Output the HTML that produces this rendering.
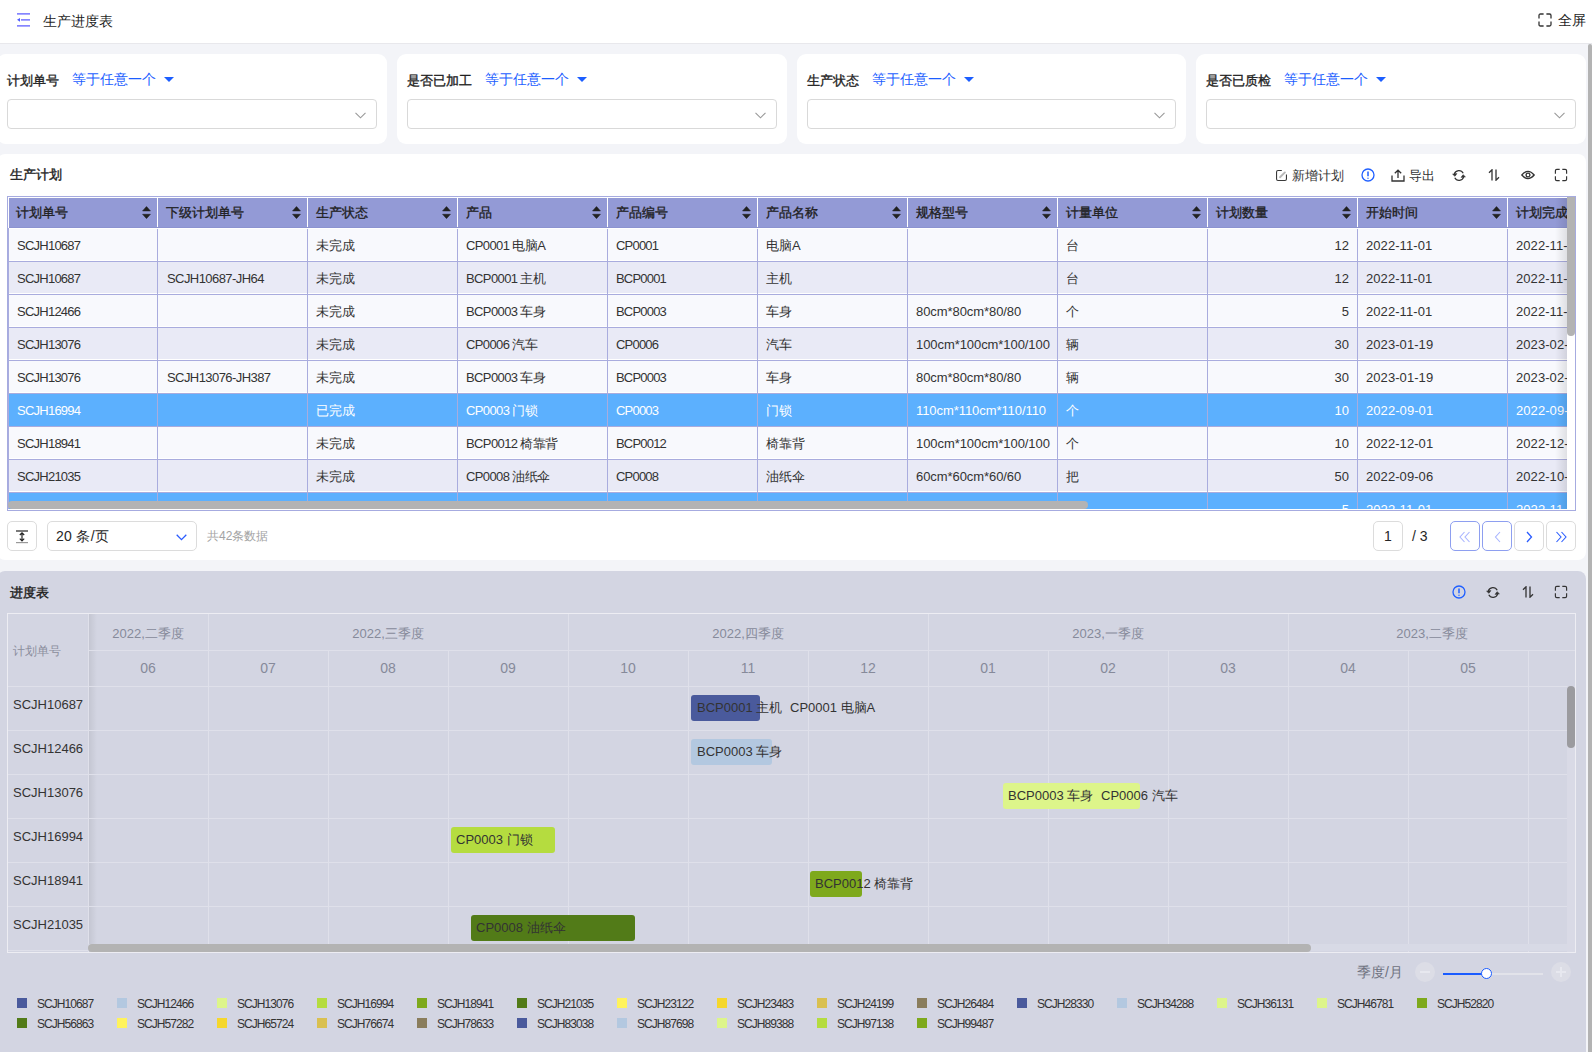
<!DOCTYPE html>
<html><head><meta charset="utf-8"><style>
*{box-sizing:border-box;margin:0;padding:0}
html,body{width:1592px;height:1052px;overflow:hidden}
body{position:relative;background:#f3f4f8;font-family:"Liberation Sans",sans-serif;color:#262626;font-size:13px}
.a{position:absolute}
svg{display:block;position:absolute}
#hdr{left:0;top:0;width:1592px;height:44px;background:#fff;border-bottom:1px solid #e8e8ec}
.card{position:absolute;background:#fff;border-radius:8px}
.flab{position:absolute;top:72px;font-size:13px;color:#1f1f1f;line-height:18px;white-space:nowrap;-webkit-text-stroke:0.35px #1f1f1f}
.fop{position:absolute;top:70px;font-size:14px;color:#1c5eff;line-height:18px;white-space:nowrap}
.ftri{position:absolute;top:77px;width:0;height:0;border-left:5px solid transparent;border-right:5px solid transparent;border-top:5px solid #1c5eff}
.fsel{position:absolute;top:99px;height:30px;border:1px solid #d9d9d9;border-radius:4px;background:#fff}
#scroll{left:1588px;top:44px;width:4px;height:1008px;background:#b3b3b3;border-radius:2px 2px 0 0}
.t{position:absolute;white-space:nowrap}
.ttl{font-size:13px;line-height:16px;color:#1f1f1f;-webkit-text-stroke:0.4px #1f1f1f}
.hc{position:absolute;top:198px;height:29px;background:#939ad6}
.ht{position:absolute;top:204px;font-size:13px;line-height:17px;color:#1f1f1f;-webkit-text-stroke:0.35px #1f1f1f;white-space:nowrap}
.row{position:absolute;left:9px;width:1558px;height:32px}
.vl{position:absolute;width:1px;background:#a9acde}
.hl{position:absolute;height:1px;background:#a9acde}
.ct{position:absolute;font-size:13px;line-height:16px;color:#333;white-space:nowrap;letter-spacing:-0.3px}
.sel .ct,.ct.w{color:#fff}
.gt{position:absolute;font-size:13px;line-height:16px;color:#333;white-space:nowrap}
.lg{position:absolute;width:10px;height:10px}
.lt{position:absolute;font-size:12px;line-height:14px;color:#333;white-space:nowrap;letter-spacing:-0.95px}
</style></head><body>
<div id="hdr" class="a">
<svg style="left:17px;top:13px" width="14" height="14" viewBox="0 0 14 14">
<rect x="0" y="0" width="13" height="1.7" fill="#8585ff"/>
<rect x="4" y="6" width="9" height="1.7" fill="#8585ff"/>
<rect x="0" y="12" width="13" height="1.7" fill="#8585ff"/>
<path d="M0 6.85 L3 5 L3 8.7 Z" fill="#4d5cff"/>
</svg>
<div class="a" style="left:43px;top:12px;font-size:14px;line-height:18px;color:#1f1f1f">生产进度表</div>
<svg style="left:1538px;top:13px" width="14" height="14" viewBox="0 0 14 14" fill="none" stroke="#333" stroke-width="1.3">
<path d="M1 5.6V2.5Q1 1 2.5 1H5.6M8.4 1h3.1Q13 1 13 2.5V5.6M13 8.4v3.1Q13 13 11.5 13H8.4M5.6 13H2.5Q1 13 1 11.5V8.4"/>
</svg>
<div class="a" style="left:1558px;top:11px;font-size:14px;line-height:18px;color:#1f1f1f">全屏</div>
</div>
<div class="card" style="left:-3px;top:54px;width:390px;height:90px;border-radius:9px"></div>
<div class="card" style="left:397px;top:54px;width:390px;height:90px;border-radius:9px"></div>
<div class="card" style="left:797px;top:54px;width:389px;height:90px;border-radius:9px"></div>
<div class="card" style="left:1196px;top:54px;width:390px;height:90px;border-radius:9px"></div>
<div class="flab" style="left:7px">计划单号</div>
<div class="fop" style="left:72px">等于任意一个</div><div class="ftri" style="left:164px"></div>
<div class="fsel" style="left:7px;width:370px"></div>
<svg style="left:355px;top:112px" width="11" height="7" viewBox="0 0 11 7" fill="none" stroke="#999" stroke-width="1.1"><path d="M0.5 0.8 L5.5 5.8 L10.5 0.8"/></svg>
<div class="flab" style="left:407px">是否已加工</div>
<div class="fop" style="left:485px">等于任意一个</div><div class="ftri" style="left:577px"></div>
<div class="fsel" style="left:407px;width:370px"></div>
<svg style="left:755px;top:112px" width="11" height="7" viewBox="0 0 11 7" fill="none" stroke="#999" stroke-width="1.1"><path d="M0.5 0.8 L5.5 5.8 L10.5 0.8"/></svg>
<div class="flab" style="left:807px">生产状态</div>
<div class="fop" style="left:872px">等于任意一个</div><div class="ftri" style="left:964px"></div>
<div class="fsel" style="left:807px;width:369px"></div>
<svg style="left:1154px;top:112px" width="11" height="7" viewBox="0 0 11 7" fill="none" stroke="#999" stroke-width="1.1"><path d="M0.5 0.8 L5.5 5.8 L10.5 0.8"/></svg>
<div class="flab" style="left:1206px">是否已质检</div>
<div class="fop" style="left:1284px">等于任意一个</div><div class="ftri" style="left:1376px"></div>
<div class="fsel" style="left:1206px;width:370px"></div>
<svg style="left:1554px;top:112px" width="11" height="7" viewBox="0 0 11 7" fill="none" stroke="#999" stroke-width="1.1"><path d="M0.5 0.8 L5.5 5.8 L10.5 0.8"/></svg>
<div class="card" style="left:-3px;top:154px;width:1589px;height:406px"></div>
<div class="t ttl" style="left:10px;top:167px">生产计划</div>
<svg style="left:1276px;top:170px" width="11" height="11" viewBox="0 0 11 11" fill="none">
<path d="M5.8 0.55H2Q0.55 0.55 0.55 2V9Q0.55 10.45 2 10.45H9Q10.45 10.45 10.45 9V4.6" stroke="#3a3a3a" stroke-width="1.1"/>
<path d="M4 7.2L8.9 2.4" stroke="#b8b8b8" stroke-width="1.9" stroke-linecap="round"/>
</svg>
<div class="t" style="left:1292px;top:168px;font-size:13px;line-height:16px;color:#333">新增计划</div>
<svg style="left:1361px;top:168px" width="14" height="14" viewBox="0 0 14 14" fill="none" stroke="#1f5fff" stroke-width="1.3">
<circle cx="7" cy="7" r="6"/><path d="M7 3.6v4.6" stroke-width="1.5"/><circle cx="7" cy="10.2" r="0.4" fill="#1f5fff" stroke-width="0.6"/>
</svg>
<svg style="left:1391px;top:169px" width="14" height="13" viewBox="0 0 14 13" fill="none" stroke="#333" stroke-width="1.3">
<path d="M1 6.5V12H13V6.5"/><path d="M7 9V1.2M3.8 4.2L7 1.2L10.2 4.2"/>
</svg>
<div class="t" style="left:1409px;top:168px;font-size:13px;line-height:16px;color:#333">导出</div>
<svg style="left:1452px;top:169px" width="14" height="13" viewBox="0 0 14 13" fill="none" stroke="#333" stroke-width="1.25">
<path d="M2.3 5.2A4.8 4.8 0 0 1 11.2 4.3"/><path d="M11.7 7.8A4.8 4.8 0 0 1 2.8 8.7"/>
<path d="M0.6 5.2L3 7.3L4.9 4.6Z" fill="#333" stroke-width="0.6"/><path d="M13.4 7.8L11 5.7L9.1 8.4Z" fill="#333" stroke-width="0.6"/>
</svg>
<svg style="left:1488px;top:169px" width="12" height="12" viewBox="0 0 12 12" fill="none" stroke="#333" stroke-width="1.3">
<path d="M4 11.5V0.8L1 3.8"/><path d="M8 0.5V11.2L11 8.2"/>
</svg>
<svg style="left:1521px;top:170px" width="14" height="10" viewBox="0 0 14 10" fill="none" stroke="#333" stroke-width="1.3">
<path d="M0.8 5Q7 -2.2 13.2 5Q7 12.2 0.8 5Z"/><circle cx="7" cy="5" r="1.9"/>
</svg>
<svg style="left:1554px;top:168px" width="14" height="14" viewBox="-0.5 -0.5 15 15" fill="none" stroke="#333" stroke-width="1.25">
<path d="M1 5.6V2.5Q1 1 2.5 1H5.6M8.4 1h3.1Q13 1 13 2.5V5.6M13 8.4v3.1Q13 13 11.5 13H8.4M5.6 13H2.5Q1 13 1 11.5V8.4"/>
</svg>
<div class="a" style="left:7px;top:196px;width:1569px;height:315px;border:1px solid #a6abe0;background:#fff"></div>
<div class="a" style="left:0;top:0;width:1592px;height:1052px;clip-path:inset(197px 25px 543px 8px)">
<div class="hc" style="left:9px;width:148px"></div>
<div class="hc" style="left:158px;width:149px"></div>
<div class="hc" style="left:308px;width:149px"></div>
<div class="hc" style="left:458px;width:149px"></div>
<div class="hc" style="left:608px;width:149px"></div>
<div class="hc" style="left:758px;width:149px"></div>
<div class="hc" style="left:908px;width:149px"></div>
<div class="hc" style="left:1058px;width:149px"></div>
<div class="hc" style="left:1208px;width:149px"></div>
<div class="hc" style="left:1358px;width:149px"></div>
<div class="hc" style="left:1508px;width:149px"></div>
<div class="a" style="left:9px;top:227px;width:1558px;height:1px;background:#8c93d0"></div>
<div class="ht" style="left:16px">计划单号</div>
<svg style="left:142px;top:206px" width="9" height="14" viewBox="0 0 9 14" fill="#222" stroke="#222" stroke-width="0.6" stroke-linejoin="round"><path d="M0.6 4.9L4.5 0.6L8.4 4.9Z"/><path d="M0.6 8.3L4.5 12.6L8.4 8.3Z"/></svg>
<div class="ht" style="left:166px">下级计划单号</div>
<svg style="left:292px;top:206px" width="9" height="14" viewBox="0 0 9 14" fill="#222" stroke="#222" stroke-width="0.6" stroke-linejoin="round"><path d="M0.6 4.9L4.5 0.6L8.4 4.9Z"/><path d="M0.6 8.3L4.5 12.6L8.4 8.3Z"/></svg>
<div class="ht" style="left:316px">生产状态</div>
<svg style="left:442px;top:206px" width="9" height="14" viewBox="0 0 9 14" fill="#222" stroke="#222" stroke-width="0.6" stroke-linejoin="round"><path d="M0.6 4.9L4.5 0.6L8.4 4.9Z"/><path d="M0.6 8.3L4.5 12.6L8.4 8.3Z"/></svg>
<div class="ht" style="left:466px">产品</div>
<svg style="left:592px;top:206px" width="9" height="14" viewBox="0 0 9 14" fill="#222" stroke="#222" stroke-width="0.6" stroke-linejoin="round"><path d="M0.6 4.9L4.5 0.6L8.4 4.9Z"/><path d="M0.6 8.3L4.5 12.6L8.4 8.3Z"/></svg>
<div class="ht" style="left:616px">产品编号</div>
<svg style="left:742px;top:206px" width="9" height="14" viewBox="0 0 9 14" fill="#222" stroke="#222" stroke-width="0.6" stroke-linejoin="round"><path d="M0.6 4.9L4.5 0.6L8.4 4.9Z"/><path d="M0.6 8.3L4.5 12.6L8.4 8.3Z"/></svg>
<div class="ht" style="left:766px">产品名称</div>
<svg style="left:892px;top:206px" width="9" height="14" viewBox="0 0 9 14" fill="#222" stroke="#222" stroke-width="0.6" stroke-linejoin="round"><path d="M0.6 4.9L4.5 0.6L8.4 4.9Z"/><path d="M0.6 8.3L4.5 12.6L8.4 8.3Z"/></svg>
<div class="ht" style="left:916px">规格型号</div>
<svg style="left:1042px;top:206px" width="9" height="14" viewBox="0 0 9 14" fill="#222" stroke="#222" stroke-width="0.6" stroke-linejoin="round"><path d="M0.6 4.9L4.5 0.6L8.4 4.9Z"/><path d="M0.6 8.3L4.5 12.6L8.4 8.3Z"/></svg>
<div class="ht" style="left:1066px">计量单位</div>
<svg style="left:1192px;top:206px" width="9" height="14" viewBox="0 0 9 14" fill="#222" stroke="#222" stroke-width="0.6" stroke-linejoin="round"><path d="M0.6 4.9L4.5 0.6L8.4 4.9Z"/><path d="M0.6 8.3L4.5 12.6L8.4 8.3Z"/></svg>
<div class="ht" style="left:1216px">计划数量</div>
<svg style="left:1342px;top:206px" width="9" height="14" viewBox="0 0 9 14" fill="#222" stroke="#222" stroke-width="0.6" stroke-linejoin="round"><path d="M0.6 4.9L4.5 0.6L8.4 4.9Z"/><path d="M0.6 8.3L4.5 12.6L8.4 8.3Z"/></svg>
<div class="ht" style="left:1366px">开始时间</div>
<svg style="left:1492px;top:206px" width="9" height="14" viewBox="0 0 9 14" fill="#222" stroke="#222" stroke-width="0.6" stroke-linejoin="round"><path d="M0.6 4.9L4.5 0.6L8.4 4.9Z"/><path d="M0.6 8.3L4.5 12.6L8.4 8.3Z"/></svg>
<div class="ht" style="left:1516px">计划完成时间</div>
<svg style="left:1642px;top:206px" width="9" height="14" viewBox="0 0 9 14" fill="#222" stroke="#222" stroke-width="0.6" stroke-linejoin="round"><path d="M0.6 4.9L4.5 0.6L8.4 4.9Z"/><path d="M0.6 8.3L4.5 12.6L8.4 8.3Z"/></svg>
<div class="row" style="top:229px;background:#f8f9fd"></div>
<div class="a" style="left:9px;top:260px;width:1558px;height:1px;background:#fff"></div>
<div class="hl" style="left:8px;top:261px;width:1559px"></div>
<div class="ct" style="left:17px;top:238px;color:#333;letter-spacing:-0.76px">SCJH10687</div>
<div class="ct" style="left:316px;top:238px;color:#333;letter-spacing:0px">未完成</div>
<div class="ct" style="left:466px;top:238px;color:#333;letter-spacing:-0.6px">CP0001 电脑A</div>
<div class="ct" style="left:616px;top:238px;color:#333;letter-spacing:-0.8px">CP0001</div>
<div class="ct" style="left:766px;top:238px;color:#333;letter-spacing:0px">电脑A</div>
<div class="ct" style="left:1066px;top:238px;color:#333;letter-spacing:0px">台</div>
<div class="ct" style="right:243px;top:238px;color:#333;letter-spacing:0.07px">12</div>
<div class="ct" style="left:1366px;top:238px;color:#333;letter-spacing:0.07px">2022-11-01</div>
<div class="ct" style="left:1516px;top:238px;color:#333;letter-spacing:0.07px">2022-11-30</div>
<div class="row" style="top:262px;background:#e9eaf6"></div>
<div class="a" style="left:9px;top:293px;width:1558px;height:1px;background:#fff"></div>
<div class="hl" style="left:8px;top:294px;width:1559px"></div>
<div class="ct" style="left:17px;top:271px;color:#333;letter-spacing:-0.76px">SCJH10687</div>
<div class="ct" style="left:167px;top:271px;color:#333;letter-spacing:-0.57px">SCJH10687-JH64</div>
<div class="ct" style="left:316px;top:271px;color:#333;letter-spacing:0px">未完成</div>
<div class="ct" style="left:466px;top:271px;color:#333;letter-spacing:-0.6px">BCP0001 主机</div>
<div class="ct" style="left:616px;top:271px;color:#333;letter-spacing:-0.8px">BCP0001</div>
<div class="ct" style="left:766px;top:271px;color:#333;letter-spacing:0px">主机</div>
<div class="ct" style="left:1066px;top:271px;color:#333;letter-spacing:0px">台</div>
<div class="ct" style="right:243px;top:271px;color:#333;letter-spacing:0.07px">12</div>
<div class="ct" style="left:1366px;top:271px;color:#333;letter-spacing:0.07px">2022-11-01</div>
<div class="ct" style="left:1516px;top:271px;color:#333;letter-spacing:0.07px">2022-11-30</div>
<div class="row" style="top:295px;background:#f8f9fd"></div>
<div class="a" style="left:9px;top:326px;width:1558px;height:1px;background:#fff"></div>
<div class="hl" style="left:8px;top:327px;width:1559px"></div>
<div class="ct" style="left:17px;top:304px;color:#333;letter-spacing:-0.76px">SCJH12466</div>
<div class="ct" style="left:316px;top:304px;color:#333;letter-spacing:0px">未完成</div>
<div class="ct" style="left:466px;top:304px;color:#333;letter-spacing:-0.6px">BCP0003 车身</div>
<div class="ct" style="left:616px;top:304px;color:#333;letter-spacing:-0.8px">BCP0003</div>
<div class="ct" style="left:766px;top:304px;color:#333;letter-spacing:0px">车身</div>
<div class="ct" style="left:916px;top:304px;color:#333;letter-spacing:-0.07px">80cm*80cm*80/80</div>
<div class="ct" style="left:1066px;top:304px;color:#333;letter-spacing:0px">个</div>
<div class="ct" style="right:243px;top:304px;color:#333;letter-spacing:0.07px">5</div>
<div class="ct" style="left:1366px;top:304px;color:#333;letter-spacing:0.07px">2022-11-01</div>
<div class="ct" style="left:1516px;top:304px;color:#333;letter-spacing:0.07px">2022-11-30</div>
<div class="row" style="top:328px;background:#e9eaf6"></div>
<div class="a" style="left:9px;top:359px;width:1558px;height:1px;background:#fff"></div>
<div class="hl" style="left:8px;top:360px;width:1559px"></div>
<div class="ct" style="left:17px;top:337px;color:#333;letter-spacing:-0.76px">SCJH13076</div>
<div class="ct" style="left:316px;top:337px;color:#333;letter-spacing:0px">未完成</div>
<div class="ct" style="left:466px;top:337px;color:#333;letter-spacing:-0.6px">CP0006 汽车</div>
<div class="ct" style="left:616px;top:337px;color:#333;letter-spacing:-0.8px">CP0006</div>
<div class="ct" style="left:766px;top:337px;color:#333;letter-spacing:0px">汽车</div>
<div class="ct" style="left:916px;top:337px;color:#333;letter-spacing:-0.07px">100cm*100cm*100/100</div>
<div class="ct" style="left:1066px;top:337px;color:#333;letter-spacing:0px">辆</div>
<div class="ct" style="right:243px;top:337px;color:#333;letter-spacing:0.07px">30</div>
<div class="ct" style="left:1366px;top:337px;color:#333;letter-spacing:0.07px">2023-01-19</div>
<div class="ct" style="left:1516px;top:337px;color:#333;letter-spacing:0.07px">2023-02-28</div>
<div class="row" style="top:361px;background:#f8f9fd"></div>
<div class="a" style="left:9px;top:392px;width:1558px;height:1px;background:#fff"></div>
<div class="hl" style="left:8px;top:393px;width:1559px"></div>
<div class="ct" style="left:17px;top:370px;color:#333;letter-spacing:-0.76px">SCJH13076</div>
<div class="ct" style="left:167px;top:370px;color:#333;letter-spacing:-0.57px">SCJH13076-JH387</div>
<div class="ct" style="left:316px;top:370px;color:#333;letter-spacing:0px">未完成</div>
<div class="ct" style="left:466px;top:370px;color:#333;letter-spacing:-0.6px">BCP0003 车身</div>
<div class="ct" style="left:616px;top:370px;color:#333;letter-spacing:-0.8px">BCP0003</div>
<div class="ct" style="left:766px;top:370px;color:#333;letter-spacing:0px">车身</div>
<div class="ct" style="left:916px;top:370px;color:#333;letter-spacing:-0.07px">80cm*80cm*80/80</div>
<div class="ct" style="left:1066px;top:370px;color:#333;letter-spacing:0px">辆</div>
<div class="ct" style="right:243px;top:370px;color:#333;letter-spacing:0.07px">30</div>
<div class="ct" style="left:1366px;top:370px;color:#333;letter-spacing:0.07px">2023-01-19</div>
<div class="ct" style="left:1516px;top:370px;color:#333;letter-spacing:0.07px">2023-02-28</div>
<div class="row" style="top:394px;background:#5cb0fe"></div>
<div class="hl" style="left:8px;top:426px;width:1559px"></div>
<div class="ct" style="left:17px;top:403px;color:#fff;letter-spacing:-0.76px">SCJH16994</div>
<div class="ct" style="left:316px;top:403px;color:#fff;letter-spacing:0px">已完成</div>
<div class="ct" style="left:466px;top:403px;color:#fff;letter-spacing:-0.6px">CP0003 门锁</div>
<div class="ct" style="left:616px;top:403px;color:#fff;letter-spacing:-0.8px">CP0003</div>
<div class="ct" style="left:766px;top:403px;color:#fff;letter-spacing:0px">门锁</div>
<div class="ct" style="left:916px;top:403px;color:#fff;letter-spacing:-0.07px">110cm*110cm*110/110</div>
<div class="ct" style="left:1066px;top:403px;color:#fff;letter-spacing:0px">个</div>
<div class="ct" style="right:243px;top:403px;color:#fff;letter-spacing:0.07px">10</div>
<div class="ct" style="left:1366px;top:403px;color:#fff;letter-spacing:0.07px">2022-09-01</div>
<div class="ct" style="left:1516px;top:403px;color:#fff;letter-spacing:0.07px">2022-09-30</div>
<div class="row" style="top:427px;background:#f8f9fd"></div>
<div class="a" style="left:9px;top:458px;width:1558px;height:1px;background:#fff"></div>
<div class="hl" style="left:8px;top:459px;width:1559px"></div>
<div class="ct" style="left:17px;top:436px;color:#333;letter-spacing:-0.76px">SCJH18941</div>
<div class="ct" style="left:316px;top:436px;color:#333;letter-spacing:0px">未完成</div>
<div class="ct" style="left:466px;top:436px;color:#333;letter-spacing:-0.6px">BCP0012 椅靠背</div>
<div class="ct" style="left:616px;top:436px;color:#333;letter-spacing:-0.8px">BCP0012</div>
<div class="ct" style="left:766px;top:436px;color:#333;letter-spacing:0px">椅靠背</div>
<div class="ct" style="left:916px;top:436px;color:#333;letter-spacing:-0.07px">100cm*100cm*100/100</div>
<div class="ct" style="left:1066px;top:436px;color:#333;letter-spacing:0px">个</div>
<div class="ct" style="right:243px;top:436px;color:#333;letter-spacing:0.07px">10</div>
<div class="ct" style="left:1366px;top:436px;color:#333;letter-spacing:0.07px">2022-12-01</div>
<div class="ct" style="left:1516px;top:436px;color:#333;letter-spacing:0.07px">2022-12-31</div>
<div class="row" style="top:460px;background:#e9eaf6"></div>
<div class="a" style="left:9px;top:491px;width:1558px;height:1px;background:#fff"></div>
<div class="hl" style="left:8px;top:492px;width:1559px"></div>
<div class="ct" style="left:17px;top:469px;color:#333;letter-spacing:-0.76px">SCJH21035</div>
<div class="ct" style="left:316px;top:469px;color:#333;letter-spacing:0px">未完成</div>
<div class="ct" style="left:466px;top:469px;color:#333;letter-spacing:-0.6px">CP0008 油纸伞</div>
<div class="ct" style="left:616px;top:469px;color:#333;letter-spacing:-0.8px">CP0008</div>
<div class="ct" style="left:766px;top:469px;color:#333;letter-spacing:0px">油纸伞</div>
<div class="ct" style="left:916px;top:469px;color:#333;letter-spacing:-0.07px">60cm*60cm*60/60</div>
<div class="ct" style="left:1066px;top:469px;color:#333;letter-spacing:0px">把</div>
<div class="ct" style="right:243px;top:469px;color:#333;letter-spacing:0.07px">50</div>
<div class="ct" style="left:1366px;top:469px;color:#333;letter-spacing:0.07px">2022-09-06</div>
<div class="ct" style="left:1516px;top:469px;color:#333;letter-spacing:0.07px">2022-10-06</div>
<div class="row" style="top:493px;background:#5cb0fe"></div>
<div class="hl" style="left:8px;top:525px;width:1559px"></div>
<div class="ct" style="left:17px;top:502px;color:#fff;letter-spacing:-0.76px">SCJH23122</div>
<div class="ct" style="left:316px;top:502px;color:#fff;letter-spacing:0px">未完成</div>
<div class="ct" style="left:466px;top:502px;color:#fff;letter-spacing:-0.6px">BCP0003 车身</div>
<div class="ct" style="left:616px;top:502px;color:#fff;letter-spacing:-0.8px">BCP0003</div>
<div class="ct" style="left:766px;top:502px;color:#fff;letter-spacing:0px">车身</div>
<div class="ct" style="left:916px;top:502px;color:#fff;letter-spacing:-0.07px">80cm*80cm*80/80</div>
<div class="ct" style="left:1066px;top:502px;color:#fff;letter-spacing:0px">个</div>
<div class="ct" style="right:243px;top:502px;color:#fff;letter-spacing:0.07px">5</div>
<div class="ct" style="left:1366px;top:502px;color:#fff;letter-spacing:0.07px">2022-11-01</div>
<div class="ct" style="left:1516px;top:502px;color:#fff;letter-spacing:0.07px">2022-11-30</div>
<div class="vl" style="left:8px;top:228px;height:282px"></div>
<div class="vl" style="left:157px;top:228px;height:282px"></div>
<div class="a" style="left:157px;top:198px;width:1px;height:29px;background:#fff"></div>
<div class="vl" style="left:307px;top:228px;height:282px"></div>
<div class="a" style="left:307px;top:198px;width:1px;height:29px;background:#fff"></div>
<div class="vl" style="left:457px;top:228px;height:282px"></div>
<div class="a" style="left:457px;top:198px;width:1px;height:29px;background:#fff"></div>
<div class="vl" style="left:607px;top:228px;height:282px"></div>
<div class="a" style="left:607px;top:198px;width:1px;height:29px;background:#fff"></div>
<div class="vl" style="left:757px;top:228px;height:282px"></div>
<div class="a" style="left:757px;top:198px;width:1px;height:29px;background:#fff"></div>
<div class="vl" style="left:907px;top:228px;height:282px"></div>
<div class="a" style="left:907px;top:198px;width:1px;height:29px;background:#fff"></div>
<div class="vl" style="left:1057px;top:228px;height:282px"></div>
<div class="a" style="left:1057px;top:198px;width:1px;height:29px;background:#fff"></div>
<div class="vl" style="left:1207px;top:228px;height:282px"></div>
<div class="a" style="left:1207px;top:198px;width:1px;height:29px;background:#fff"></div>
<div class="vl" style="left:1357px;top:228px;height:282px"></div>
<div class="a" style="left:1357px;top:198px;width:1px;height:29px;background:#fff"></div>
<div class="vl" style="left:1507px;top:228px;height:282px"></div>
<div class="a" style="left:1507px;top:198px;width:1px;height:29px;background:#fff"></div>
<div class="a" style="left:9px;top:228px;width:1558px;height:1px;background:#fff"></div>
</div>
<div class="a" style="left:1555px;top:198px;width:12px;height:311px;background:linear-gradient(to right,rgba(0,0,0,0),rgba(0,0,0,0.10))"></div>
<div class="a" style="left:1567px;top:197px;width:8px;height:313px;background:#fff"></div>
<div class="a" style="left:1567px;top:197px;width:8px;height:139px;background:#b3b3b3;border-radius:0 0 4px 4px"></div>
<div class="a" style="left:8px;top:501px;width:1080px;height:8px;background:#b3b3b3;border-radius:4px"></div>
<div class="a" style="left:7px;top:521px;width:30px;height:30px;border:1px solid #dcdcdc;border-radius:5px;background:#fff"></div>
<svg style="left:15px;top:530px" width="14" height="14" viewBox="0 0 14 14" fill="none" stroke="#222" stroke-width="1.2">
<path d="M1 1H13"/><path d="M1 12.6H13" stroke="#999"/><path d="M7 3V10.6M4.8 5L7 2.8L9.2 5M4.8 8.6L7 10.8L9.2 8.6"/>
</svg>
<div class="a" style="left:47px;top:521px;width:150px;height:30px;border:1px solid #dcdcdc;border-radius:5px;background:#fff"></div>
<div class="t" style="left:56px;top:527px;font-size:14px;line-height:18px;color:#262626;letter-spacing:0.3px">20 条/页</div>
<svg style="left:176px;top:534px" width="11" height="7" viewBox="0 0 11 7" fill="none" stroke="#2a5cff" stroke-width="1.3"><path d="M0.7 0.8L5.5 5.6L10.3 0.8"/></svg>
<div class="t" style="left:207px;top:528px;font-size:12px;line-height:16px;color:#a3a3a3">共42条数据</div>
<div class="a" style="left:1373px;top:521px;width:30px;height:30px;border:1px solid #dcdcdc;border-radius:5px;background:#fff"></div>
<div class="t" style="left:1384px;top:528px;font-size:14px;line-height:16px;color:#262626">1</div>
<div class="t" style="left:1412px;top:528px;font-size:14px;line-height:16px;color:#262626">/ 3</div>
<div class="a" style="left:1450px;top:521px;width:30px;height:30px;border:1px solid #8e9ff0;border-radius:5px;background:#fff"></div>
<div class="a" style="left:1482px;top:521px;width:30px;height:30px;border:1px solid #8e9ff0;border-radius:5px;background:#fff"></div>
<div class="a" style="left:1514px;top:521px;width:30px;height:30px;border:1px solid #dcdcdc;border-radius:5px;background:#fff"></div>
<div class="a" style="left:1546px;top:521px;width:30px;height:30px;border:1px solid #dcdcdc;border-radius:5px;background:#fff"></div>
<svg style="left:1459px;top:531px" width="12" height="12" viewBox="0 0 12 12" fill="none" stroke="#a8b4ff" stroke-width="1.1"><path d="M5.5 1L1 6L5.5 11M10.5 1L6 6L10.5 11"/></svg>
<svg style="left:1494px;top:531px" width="8" height="12" viewBox="0 0 8 12" fill="none" stroke="#a8b4ff" stroke-width="1.1"><path d="M6 1L1.5 6L6 11"/></svg>
<svg style="left:1525px;top:531px" width="8" height="12" viewBox="0 0 8 12" fill="none" stroke="#2a5cff" stroke-width="1.3"><path d="M2 1L6.5 6L2 11"/></svg>
<svg style="left:1555px;top:531px" width="12" height="12" viewBox="0 0 12 12" fill="none" stroke="#2a5cff" stroke-width="1.1"><path d="M1.5 1L6 6L1.5 11M6.5 1L11 6L6.5 11"/></svg>
<div class="card" style="left:-3px;top:571px;width:1589px;height:500px;background:#d3d5e2"></div>
<div class="t ttl" style="left:10px;top:585px">进度表</div>
<svg style="left:1452px;top:585px" width="14" height="14" viewBox="0 0 14 14" fill="none" stroke="#1f5fff" stroke-width="1.3">
<circle cx="7" cy="7" r="6"/><path d="M7 3.6v4.6" stroke-width="1.5"/><circle cx="7" cy="10.2" r="0.4" fill="#1f5fff" stroke-width="0.6"/>
</svg>
<svg style="left:1486px;top:586px" width="14" height="13" viewBox="0 0 14 13" fill="none" stroke="#333" stroke-width="1.25">
<path d="M2.3 5.2A4.8 4.8 0 0 1 11.2 4.3"/><path d="M11.7 7.8A4.8 4.8 0 0 1 2.8 8.7"/>
<path d="M0.6 5.2L3 7.3L4.9 4.6Z" fill="#333" stroke-width="0.6"/><path d="M13.4 7.8L11 5.7L9.1 8.4Z" fill="#333" stroke-width="0.6"/>
</svg>
<svg style="left:1522px;top:586px" width="12" height="12" viewBox="0 0 12 12" fill="none" stroke="#333" stroke-width="1.3">
<path d="M4 11.5V0.8L1 3.8"/><path d="M8 0.5V11.2L11 8.2"/>
</svg>
<svg style="left:1554px;top:585px" width="14" height="14" viewBox="-0.5 -0.5 15 15" fill="none" stroke="#333" stroke-width="1.25">
<path d="M1 5.6V2.5Q1 1 2.5 1H5.6M8.4 1h3.1Q13 1 13 2.5V5.6M13 8.4v3.1Q13 13 11.5 13H8.4M5.6 13H2.5Q1 13 1 11.5V8.4"/>
</svg>
<div class="a" style="left:7px;top:613px;width:1569px;height:340px;border:1px solid #ededf3"></div>
<div class="a" style="left:88px;top:614px;width:1px;height:338px;background:#dfe0ea"></div>
<div class="a" style="left:89px;top:614px;width:8px;height:338px;background:linear-gradient(to right,rgba(0,0,0,0.07),rgba(0,0,0,0))"></div>
<div class="gt" style="left:13px;top:643px;color:#8a8d9c;font-size:12px">计划单号</div>
<div class="a" style="left:89px;top:650px;width:1486px;height:1px;background:#dfe0ea"></div>
<div class="a" style="left:8px;top:686px;width:1567px;height:1px;background:#dfe0ea"></div>
<div class="a" style="left:8px;top:730px;width:1567px;height:1px;background:#dfe0ea"></div>
<div class="a" style="left:8px;top:774px;width:1567px;height:1px;background:#dfe0ea"></div>
<div class="a" style="left:8px;top:818px;width:1567px;height:1px;background:#dfe0ea"></div>
<div class="a" style="left:8px;top:862px;width:1567px;height:1px;background:#dfe0ea"></div>
<div class="a" style="left:8px;top:906px;width:1567px;height:1px;background:#dfe0ea"></div>
<div class="a" style="left:8px;top:950px;width:1567px;height:1px;background:#dfe0ea"></div>
<div class="a" style="left:208px;top:614px;width:1px;height:36px;background:#dfe0ea"></div>
<div class="a" style="left:568px;top:614px;width:1px;height:36px;background:#dfe0ea"></div>
<div class="a" style="left:928px;top:614px;width:1px;height:36px;background:#dfe0ea"></div>
<div class="a" style="left:1288px;top:614px;width:1px;height:36px;background:#dfe0ea"></div>
<div class="a" style="left:208px;top:651px;width:1px;height:301px;background:#dfe0ea"></div>
<div class="a" style="left:328px;top:651px;width:1px;height:301px;background:#dfe0ea"></div>
<div class="a" style="left:448px;top:651px;width:1px;height:301px;background:#dfe0ea"></div>
<div class="a" style="left:568px;top:651px;width:1px;height:301px;background:#dfe0ea"></div>
<div class="a" style="left:688px;top:651px;width:1px;height:301px;background:#dfe0ea"></div>
<div class="a" style="left:808px;top:651px;width:1px;height:301px;background:#dfe0ea"></div>
<div class="a" style="left:928px;top:651px;width:1px;height:301px;background:#dfe0ea"></div>
<div class="a" style="left:1048px;top:651px;width:1px;height:301px;background:#dfe0ea"></div>
<div class="a" style="left:1168px;top:651px;width:1px;height:301px;background:#dfe0ea"></div>
<div class="a" style="left:1288px;top:651px;width:1px;height:301px;background:#dfe0ea"></div>
<div class="a" style="left:1408px;top:651px;width:1px;height:301px;background:#dfe0ea"></div>
<div class="a" style="left:1528px;top:651px;width:1px;height:301px;background:#dfe0ea"></div>
<div class="gt" style="left:88px;width:120px;text-align:center;top:626px;color:#868a9a">2022,二季度</div>
<div class="gt" style="left:328px;width:120px;text-align:center;top:626px;color:#868a9a">2022,三季度</div>
<div class="gt" style="left:688px;width:120px;text-align:center;top:626px;color:#868a9a">2022,四季度</div>
<div class="gt" style="left:1048px;width:120px;text-align:center;top:626px;color:#868a9a">2023,一季度</div>
<div class="gt" style="left:1372px;width:120px;text-align:center;top:626px;color:#868a9a">2023,二季度</div>
<div class="gt" style="left:118px;width:60px;text-align:center;top:660px;color:#868a9a;font-size:14px">06</div>
<div class="gt" style="left:238px;width:60px;text-align:center;top:660px;color:#868a9a;font-size:14px">07</div>
<div class="gt" style="left:358px;width:60px;text-align:center;top:660px;color:#868a9a;font-size:14px">08</div>
<div class="gt" style="left:478px;width:60px;text-align:center;top:660px;color:#868a9a;font-size:14px">09</div>
<div class="gt" style="left:598px;width:60px;text-align:center;top:660px;color:#868a9a;font-size:14px">10</div>
<div class="gt" style="left:718px;width:60px;text-align:center;top:660px;color:#868a9a;font-size:14px">11</div>
<div class="gt" style="left:838px;width:60px;text-align:center;top:660px;color:#868a9a;font-size:14px">12</div>
<div class="gt" style="left:958px;width:60px;text-align:center;top:660px;color:#868a9a;font-size:14px">01</div>
<div class="gt" style="left:1078px;width:60px;text-align:center;top:660px;color:#868a9a;font-size:14px">02</div>
<div class="gt" style="left:1198px;width:60px;text-align:center;top:660px;color:#868a9a;font-size:14px">03</div>
<div class="gt" style="left:1318px;width:60px;text-align:center;top:660px;color:#868a9a;font-size:14px">04</div>
<div class="gt" style="left:1438px;width:60px;text-align:center;top:660px;color:#868a9a;font-size:14px">05</div>
<div class="gt" style="left:13px;top:697px;color:#333">SCJH10687</div>
<div class="gt" style="left:13px;top:741px;color:#333">SCJH12466</div>
<div class="gt" style="left:13px;top:785px;color:#333">SCJH13076</div>
<div class="gt" style="left:13px;top:829px;color:#333">SCJH16994</div>
<div class="gt" style="left:13px;top:873px;color:#333">SCJH18941</div>
<div class="gt" style="left:13px;top:917px;color:#333">SCJH21035</div>
<div class="a" style="left:691px;top:695px;width:69px;height:26px;background:#4a5a9c;border-radius:3px"></div>
<div class="gt" style="left:697px;top:700px;color:#333">BCP0001 主机</div>
<div class="gt" style="left:790px;top:700px;color:#333">CP0001 电脑A</div>
<div class="a" style="left:691px;top:739px;width:81px;height:26px;background:#b3c8e0;border-radius:3px"></div>
<div class="gt" style="left:697px;top:744px;color:#333">BCP0003 车身</div>
<div class="a" style="left:1003px;top:783px;width:137px;height:26px;background:#ddf58a;border-radius:3px"></div>
<div class="gt" style="left:1008px;top:788px;color:#333">BCP0003 车身</div>
<div class="gt" style="left:1101px;top:788px;color:#333">CP0006 汽车</div>
<div class="a" style="left:451px;top:827px;width:104px;height:26px;background:#b5dc3f;border-radius:3px"></div>
<div class="gt" style="left:456px;top:832px;color:#333">CP0003 门锁</div>
<div class="a" style="left:810px;top:871px;width:52px;height:26px;background:#7ea91c;border-radius:3px"></div>
<div class="gt" style="left:815px;top:876px;color:#333">BCP0012 椅靠背</div>
<div class="a" style="left:471px;top:915px;width:164px;height:26px;background:#527b18;border-radius:3px"></div>
<div class="gt" style="left:476px;top:920px;color:#333">CP0008 油纸伞</div>
<div class="a" style="left:1567px;top:686px;width:8px;height:266px;background:#d9dae6"></div>
<div class="a" style="left:88px;top:944px;width:1479px;height:7px;background:#d8dae6"></div>
<div class="a" style="left:1567px;top:686px;width:8px;height:62px;background:#9b9b9f;border-radius:4px"></div>
<div class="a" style="left:88px;top:944px;width:1223px;height:8px;background:#b3b3b3;border-radius:4px"></div>
<div class="gt" style="left:1357px;top:964px;color:#6f7280;font-size:14px;line-height:17px">季度/月</div>
<div class="a" style="left:1415px;top:962px;width:20px;height:20px;border-radius:50%;background:#dcdde6"></div>
<div class="a" style="left:1420px;top:971px;width:10px;height:2px;background:#e7e8ef"></div>
<div class="a" style="left:1551px;top:962px;width:20px;height:20px;border-radius:50%;background:#dcdde6"></div>
<div class="a" style="left:1556px;top:971px;width:10px;height:2px;background:#e7e8ef"></div>
<div class="a" style="left:1560px;top:967px;width:2px;height:10px;background:#e7e8ef"></div>
<div class="a" style="left:1443px;top:973px;width:100px;height:2px;background:#e2e3ea"></div>
<div class="a" style="left:1443px;top:973px;width:42px;height:2px;background:#1a5cff"></div>
<div class="a" style="left:1481px;top:968px;width:11px;height:11px;border-radius:50%;background:#fff;border:1.6px solid #1a5cff"></div>
<div class="lg" style="left:17px;top:998px;background:#4a5a9c"></div>
<div class="lt" style="left:37px;top:997px">SCJH10687</div>
<div class="lg" style="left:117px;top:998px;background:#b3c8e0"></div>
<div class="lt" style="left:137px;top:997px">SCJH12466</div>
<div class="lg" style="left:217px;top:998px;background:#ddf58a"></div>
<div class="lt" style="left:237px;top:997px">SCJH13076</div>
<div class="lg" style="left:317px;top:998px;background:#b5dc3f"></div>
<div class="lt" style="left:337px;top:997px">SCJH16994</div>
<div class="lg" style="left:417px;top:998px;background:#7ea91c"></div>
<div class="lt" style="left:437px;top:997px">SCJH18941</div>
<div class="lg" style="left:517px;top:998px;background:#527b18"></div>
<div class="lt" style="left:537px;top:997px">SCJH21035</div>
<div class="lg" style="left:617px;top:998px;background:#fff35c"></div>
<div class="lt" style="left:637px;top:997px">SCJH23122</div>
<div class="lg" style="left:717px;top:998px;background:#f5d72c"></div>
<div class="lt" style="left:737px;top:997px">SCJH23483</div>
<div class="lg" style="left:817px;top:998px;background:#d9c050"></div>
<div class="lt" style="left:837px;top:997px">SCJH24199</div>
<div class="lg" style="left:917px;top:998px;background:#8a7d5c"></div>
<div class="lt" style="left:937px;top:997px">SCJH26484</div>
<div class="lg" style="left:1017px;top:998px;background:#4a5a9c"></div>
<div class="lt" style="left:1037px;top:997px">SCJH28330</div>
<div class="lg" style="left:1117px;top:998px;background:#b3c8e0"></div>
<div class="lt" style="left:1137px;top:997px">SCJH34288</div>
<div class="lg" style="left:1217px;top:998px;background:#ddf58a"></div>
<div class="lt" style="left:1237px;top:997px">SCJH36131</div>
<div class="lg" style="left:1317px;top:998px;background:#ddf58a"></div>
<div class="lt" style="left:1337px;top:997px">SCJH46781</div>
<div class="lg" style="left:1417px;top:998px;background:#7ea91c"></div>
<div class="lt" style="left:1437px;top:997px">SCJH52820</div>
<div class="lg" style="left:17px;top:1018px;background:#527b18"></div>
<div class="lt" style="left:37px;top:1017px">SCJH56863</div>
<div class="lg" style="left:117px;top:1018px;background:#fff35c"></div>
<div class="lt" style="left:137px;top:1017px">SCJH57282</div>
<div class="lg" style="left:217px;top:1018px;background:#f5d72c"></div>
<div class="lt" style="left:237px;top:1017px">SCJH65724</div>
<div class="lg" style="left:317px;top:1018px;background:#d9c050"></div>
<div class="lt" style="left:337px;top:1017px">SCJH76674</div>
<div class="lg" style="left:417px;top:1018px;background:#8a7d5c"></div>
<div class="lt" style="left:437px;top:1017px">SCJH78633</div>
<div class="lg" style="left:517px;top:1018px;background:#4a5a9c"></div>
<div class="lt" style="left:537px;top:1017px">SCJH83038</div>
<div class="lg" style="left:617px;top:1018px;background:#b3c8e0"></div>
<div class="lt" style="left:637px;top:1017px">SCJH87698</div>
<div class="lg" style="left:717px;top:1018px;background:#ddf58a"></div>
<div class="lt" style="left:737px;top:1017px">SCJH89388</div>
<div class="lg" style="left:817px;top:1018px;background:#b5dc3f"></div>
<div class="lt" style="left:837px;top:1017px">SCJH97138</div>
<div class="lg" style="left:917px;top:1018px;background:#7ea91c"></div>
<div class="lt" style="left:937px;top:1017px">SCJH99487</div>
<div id="scroll" class="a"></div>
</body></html>
